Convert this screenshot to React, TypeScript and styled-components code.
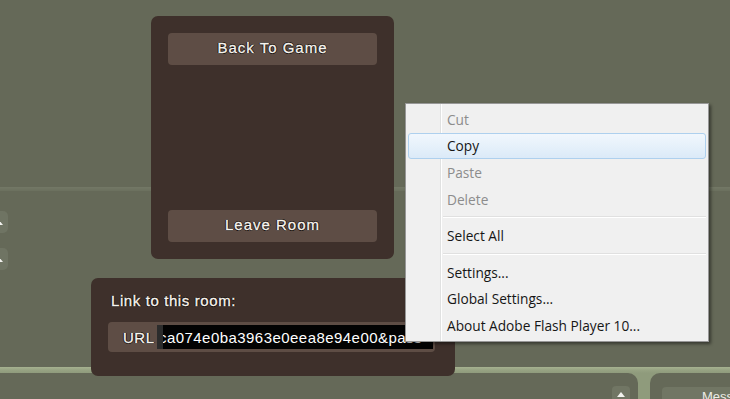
import React from "react";
import styled, { createGlobalStyle } from "styled-components";

const GlobalStyle = createGlobalStyle`
  html, body {
    margin: 0;
    padding: 0;
    background: #656958;
  }
  * {
    box-sizing: border-box;
  }
`;

const flashText = `
  font-family: "Liberation Sans", Arial, sans-serif;
  font-size: 15px;
  color: #f8f4ee;
  -webkit-text-stroke: 0.3px #f8f4ee;
  text-shadow: 1px 0 0 #120c09, -1px 0 0 #120c09, 0 1px 0 #120c09,
    0 -1px 0 #120c09;
`;

const Stage = styled.div`
  position: relative;
  width: 730px;
  height: 399px;
  overflow: hidden;
  display: flex;
  flex-direction: column;
  background: #656958;
`;

const TopArea = styled.div`
  height: 187px;
  background: #656958;
`;

const Seam = styled.div`
  height: 4px;
  background: linear-gradient(#737866, #6b705e);
`;

const MidArea = styled.div`
  flex: 1;
  padding-top: 20px;
  display: flex;
  flex-direction: column;
  gap: 15px;
`;

const SideTab = styled.div`
  width: 24px;
  height: 22px;
  margin-left: -16px;
  border-radius: 5px;
  background: #6f7463;
  display: flex;
  align-items: center;
  justify-content: flex-end;
  padding-right: 5px;
`;

const Arrow = styled.span`
  width: 0;
  height: 0;
  border-left: 4px solid transparent;
  border-right: 4px solid transparent;
  border-bottom: 5px solid #f2f2ee;
`;

const BottomArea = styled.div`
  height: 32px;
  flex-shrink: 0;
  padding-top: 6px;
  background: linear-gradient(#a6b290 0px, #97a383 3px, #8f9b7c 6px);
  display: flex;
  gap: 12px;
`;

const ChatPanel = styled.div`
  width: 638px;
  flex-shrink: 0;
  background: #656958;
  border-radius: 0 10px 0 0;
  display: flex;
  justify-content: flex-end;
  padding: 13px 8px 0 0;
`;

const SmallTab = styled.div`
  width: 18px;
  height: 20px;
  border-radius: 4px 4px 0 0;
  background: #717664;
  display: flex;
  justify-content: center;
  padding-top: 6px;
`;

const SidePanel = styled.div`
  flex: 1;
  min-width: 0;
  overflow: hidden;
  background: #656958;
  border-radius: 10px 0 0 0;
  padding: 14px 0 0 12px;
`;

const PanelButton = styled.div`
  width: 120px;
  height: 20px;
  border-radius: 4px 0 0 0;
  background: #717664;
  padding: 2px 0 0 40px;
  font-family: "Liberation Sans", Arial, sans-serif;
  font-size: 13px;
  color: #ecece4;
  white-space: nowrap;
`;

const RoomDialog = styled.div`
  position: absolute;
  left: 151px;
  top: 16px;
  width: 243px;
  height: 243px;
  padding: 17px;
  border-radius: 7px;
  background: #3e302b;
  display: flex;
  flex-direction: column;
  justify-content: space-between;
`;

const DialogButton = styled.div`
  height: 32px;
  border-radius: 4px;
  background: #5e4d45;
  display: flex;
  align-items: center;
  justify-content: center;
  padding-bottom: 3px;
  letter-spacing: 1px;
  ${flashText}
`;

const LinkDialog = styled.div`
  position: absolute;
  left: 91px;
  top: 278px;
  width: 364px;
  height: 98px;
  padding: 14px 20px 0 17px;
  border-radius: 7px;
  background: #3e302b;
`;

const LinkLabel = styled.div`
  height: 30px;
  padding-left: 3px;
  letter-spacing: 0.6px;
  ${flashText}
`;

const UrlBox = styled.div`
  height: 30px;
  border-radius: 4px;
  background: #5e4d45;
  display: flex;
  align-items: center;
  padding: 0 2px 0 15px;
`;

const UrlLabel = styled.span`
  width: 34px;
  letter-spacing: 0.5px;
  ${flashText}
`;

const Field = styled.div`
  flex: 1;
  height: 24px;
  background: #030303;
  border-left: 6px solid #2c2c2c;
  overflow: hidden;
  display: flex;
  align-items: center;
`;

const FieldText = styled.span`
  margin-left: -4px;
  font-family: "Liberation Sans", Arial, sans-serif;
  font-size: 15px;
  letter-spacing: 0.45px;
  color: #ffffff;
  white-space: nowrap;
`;

const ContextMenu = styled.div`
  position: absolute;
  left: 405px;
  top: 103px;
  width: 304px;
  padding: 2px;
  border: 1px solid #979797;
  background: linear-gradient(
      to right,
      transparent 34px,
      #e0e1e1 34px,
      #e0e1e1 35px,
      #ffffff 35px,
      #ffffff 36px,
      transparent 36px
    ),
    #f0f0f0;
  box-shadow: 2px 2px 3px rgba(0, 0, 0, 0.45);
  font-family: "Open Sans", "Segoe UI", sans-serif;
  font-size: 13.7px;
`;

const MenuItem = styled.div<{ $disabled?: boolean; $active?: boolean }>`
  height: 26.6px;
  display: flex;
  align-items: center;
  padding-left: 38px;
  border: 1px solid ${(p) => (p.$active ? "#aed0ee" : "transparent")};
  border-radius: 3px;
  background: ${(p) =>
    p.$active ? "linear-gradient(#f1f7fd, #dbeaf8)" : "transparent"};
  color: ${(p) => (p.$disabled ? "#8c8c8c" : "#161616")};
  white-space: nowrap;
`;

const MenuSeparator = styled.div`
  height: 2px;
  margin: 4px 0 4px 35px;
  border-top: 1px solid #e0e0e0;
  border-bottom: 1px solid #ffffff;
`;

export default function App() {
  return (
    <>
      <GlobalStyle />
      <Stage>
        <TopArea />
        <Seam />
        <MidArea>
          <SideTab>
            <Arrow />
          </SideTab>
          <SideTab>
            <Arrow />
          </SideTab>
        </MidArea>
        <BottomArea>
          <ChatPanel>
            <SmallTab>
              <Arrow />
            </SmallTab>
          </ChatPanel>
          <SidePanel>
            <PanelButton>Messages</PanelButton>
          </SidePanel>
        </BottomArea>

        <RoomDialog>
          <DialogButton>Back To Game</DialogButton>
          <DialogButton>Leave Room</DialogButton>
        </RoomDialog>

        <LinkDialog>
          <LinkLabel>Link to this room:</LinkLabel>
          <UrlBox>
            <UrlLabel>URL</UrlLabel>
            <Field>
              <FieldText>ca074e0ba3963e0eea8e94e00&amp;pass=</FieldText>
            </Field>
          </UrlBox>
        </LinkDialog>

        <ContextMenu>
          <MenuItem $disabled>Cut</MenuItem>
          <MenuItem $active>Copy</MenuItem>
          <MenuItem $disabled>Paste</MenuItem>
          <MenuItem $disabled>Delete</MenuItem>
          <MenuSeparator />
          <MenuItem>Select All</MenuItem>
          <MenuSeparator />
          <MenuItem>Settings...</MenuItem>
          <MenuItem>Global Settings...</MenuItem>
          <MenuItem>About Adobe Flash Player 10...</MenuItem>
        </ContextMenu>
      </Stage>
    </>
  );
}
